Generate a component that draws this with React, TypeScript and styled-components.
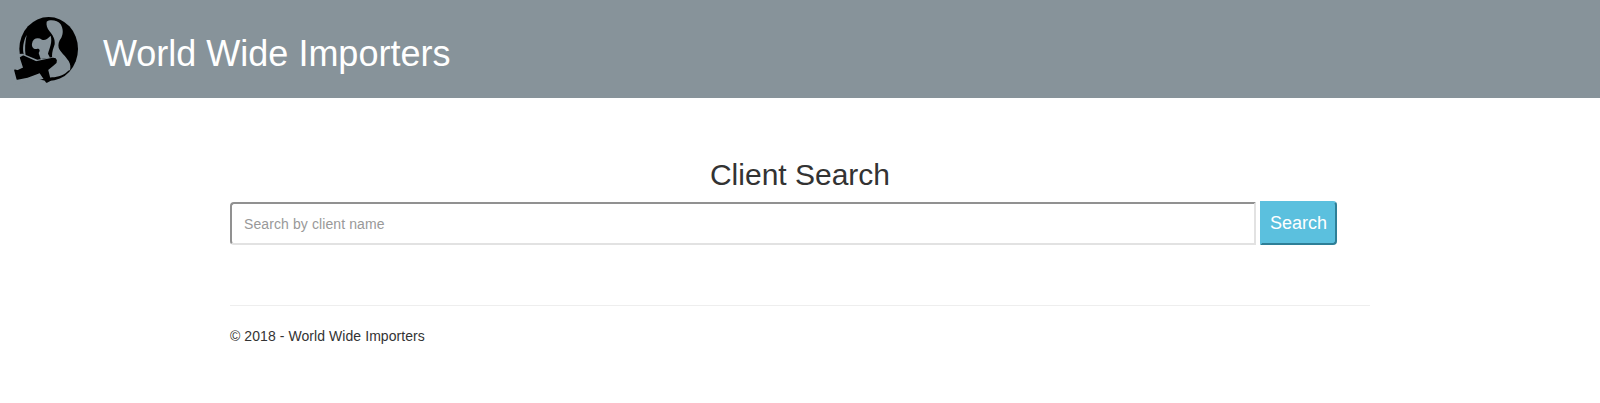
import React from 'react';
import styled, { createGlobalStyle } from 'styled-components';

const HEADER_COLOR = '#87939a';

const GlobalStyle = createGlobalStyle`
  * {
    box-sizing: border-box;
  }

  body {
    margin: 0;
    background: #fff;
    color: #333;
    font-family: 'Liberation Sans', Arial, sans-serif;
    font-size: 14px;
    line-height: 1.42857;
  }
`;

const Header = styled.header`
  display: flex;
  align-items: center;
  height: 98px;
  padding-left: 12px;
  background: ${HEADER_COLOR};
`;

const Logo = styled.svg`
  display: block;
  width: 70px;
  height: 72px;
  flex: none;
`;

const Brand = styled.h1`
  margin: 10px 0 0 21px;
  color: #fff;
  font-size: 36px;
  font-weight: 400;
  line-height: 40px;
`;

const Container = styled.main`
  width: 1170px;
  margin: 0 auto;
  padding: 0 15px;
`;

const Title = styled.h2`
  margin: 60px 0 10px;
  font-size: 30px;
  font-weight: 400;
  line-height: 33px;
  text-align: center;
`;

const SearchRow = styled.form`
  display: flex;
  align-items: flex-start;
  gap: 4px;
  width: 1107px;
`;

const SearchInput = styled.input`
  width: 1027px;
  height: 43px;
  margin-top: 1px;
  padding: 0 12px;
  border: 2px solid;
  border-color: #919191 #e2e2e2 #e2e2e2 #919191;
  border-radius: 4px 0 0 4px;
  background: #fff;
  color: #555;
  font: 14px 'Liberation Sans', Arial, sans-serif;
  letter-spacing: 0.1px;

  &::placeholder {
    color: #999;
    opacity: 1;
  }
`;

const SearchButton = styled.button`
  width: 77px;
  height: 44px;
  padding: 0;
  border: 2px solid;
  border-color: #5bc0de #2e7f97 #2e7f97 #5bc0de;
  border-radius: 0 4px 4px 0;
  background: #5bc0de;
  color: #fff;
  font: 18px 'Liberation Sans', Arial, sans-serif;
`;

const Rule = styled.hr`
  margin: 60px 0 21px;
  border: 0;
  border-top: 1px solid #eee;
`;

const Copyright = styled.p`
  margin: 0;
  letter-spacing: 0.07px;
`;

export default function App() {
  return (
    <>
      <GlobalStyle />
      <Header>
        <Logo viewBox="0 0 210 216" aria-hidden="true">
          {/* globe */}
          <ellipse cx="110" cy="108" rx="88" ry="96" />
          {/* land, and the gap the plane flies through */}
          <g fill={HEADER_COLOR}>
            <path d="M104 26C114 18 138 22 146 34C154 48 154 62 148 74C140 84 138 94 140 104C144 116 160 128 170 144C176 154 176 162 174 172L150 172C138 160 124 148 120 130C120 116 124 106 128 94C130 78 122 66 112 54C106 46 102 36 104 26Z" />
            <path d="M60 92C62 76 78 72 90 80C98 84 106 78 116 68C122 88 112 106 108 122L114 134L86 138L80 120C86 112 82 106 74 108C66 110 58 102 60 92Z" />
            <path d="M36 128C30 108 34 84 44 66C39 90 38 108 41 128Z" />
            <path d="M0 124L32 122L76 140L144 128L172 170C158 186 138 192 120 193L0 216Z" />
          </g>
          {/* plane */}
          <path
            strokeWidth="5"
            strokeLinejoin="round"
            stroke="#000"
            d="M26 134L34 130L72 147L122 137C134 136 136 146 126 153L106 170L114 202L104 207L84 178L46 192L16 198L9 172L17 174L36 165Z"
          />
        </Logo>
        <Brand>World Wide Importers</Brand>
      </Header>
      <Container>
        <Title>Client Search</Title>
        <SearchRow>
          <SearchInput placeholder="Search by client name" />
          <SearchButton type="button">Search</SearchButton>
        </SearchRow>
        <Rule />
        <Copyright>© 2018 - World Wide Importers</Copyright>
      </Container>
    </>
  );
}
